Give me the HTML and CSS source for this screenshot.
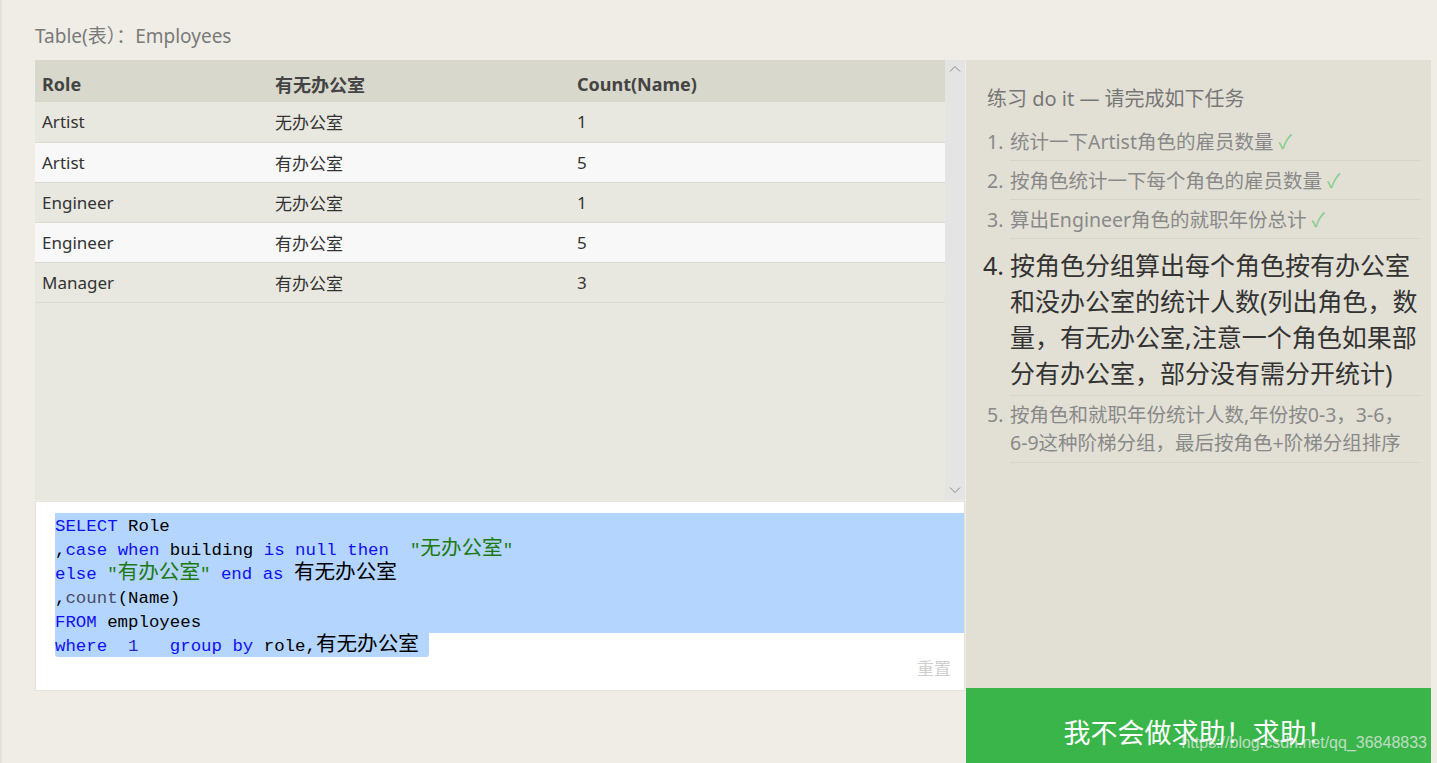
FILE: index.html
```html
<!DOCTYPE html>
<html>
    <head>
        <title>SQL 练习</title>
        <meta charset="utf-8"/>
        <link rel="stylesheet" href="styles.css">
    </head>
    <body>
        <div id="page">
            <h2 class="caption">Table(表）：Employees</h2>
            <div class="main">
                <div class="left">
                    <div class="result">
                        <div class="grid">
                            <table>
                                <colgroup>
                                    <col class="c1">
                                    <col class="c2">
                                    <col>
                                </colgroup>
                                <thead>
                                    <tr><th>Role</th><th>有无办公室</th><th>Count(Name)</th></tr>
                                </thead>
                                <tbody>
                                    <tr><td>Artist</td><td>无办公室</td><td>1</td></tr>
                                    <tr><td>Artist</td><td>有办公室</td><td>5</td></tr>
                                    <tr><td>Engineer</td><td>无办公室</td><td>1</td></tr>
                                    <tr><td>Engineer</td><td>有办公室</td><td>5</td></tr>
                                    <tr><td>Manager</td><td>有办公室</td><td>3</td></tr>
                                </tbody>
                            </table>
                        </div>
                        <div class="scrollbar">
                            <svg width="12" height="8" viewBox="0 0 12 8"><path d="M1 6.5 L6 1.5 L11 6.5" fill="none" stroke="#8a8a8a" stroke-width="1"/></svg>
                            <svg width="12" height="8" viewBox="0 0 12 8"><path d="M1 1.5 L6 6.5 L11 1.5" fill="none" stroke="#8a8a8a" stroke-width="1"/></svg>
                        </div>
                    </div>
                    <div class="editor">
                        <div class="code">
                            <div class="line sel"><span class="kw">SELECT</span> Role</div>
                            <div class="line sel">,<span class="kw">case</span> <span class="kw">when</span> building <span class="kw">is</span> <span class="kw">null</span> <span class="kw">then</span>  <span class="str">"<span class="zh">无办公室</span>"</span></div>
                            <div class="line sel"><span class="kw">else</span> <span class="str">"<span class="zh">有办公室</span>"</span> <span class="kw">end</span> <span class="kw">as</span> <span class="zh">有无办公室</span></div>
                            <div class="line sel">,<span class="fn">count</span>(Name)</div>
                            <div class="line sel"><span class="kw">FROM</span> employees</div>
                            <div class="line"><span class="sel"><span class="kw">where</span>  <span class="num">1</span>   <span class="kw">group</span> <span class="kw">by</span> role,<span class="zh">有无办公室</span> </span></div>
                        </div>
                        <div class="reset">重置</div>
                    </div>
                </div>
                <div class="right">
                    <div class="tasks">
                        <h3>练习 do it — 请完成如下任务</h3>
                        <ol>
                            <li class="done"><span class="no">1.</span><div class="txt">统计一下Artist角色的雇员数量 <span class="ok">✓</span></div></li>
                            <li class="done"><span class="no">2.</span><div class="txt">按角色统计一下每个角色的雇员数量 <span class="ok">✓</span></div></li>
                            <li class="done"><span class="no">3.</span><div class="txt">算出Engineer角色的就职年份总计 <span class="ok">✓</span></div></li>
                            <li class="current"><span class="no">4.</span><div class="txt">按角色分组算出每个角色按有办公室和没办公室的统计人数(列出角色，数量，有无办公室,注意一个角色如果部分有办公室，部分没有需分开统计)</div></li>
                            <li class="todo"><span class="no">5.</span><div class="txt">按角色和就职年份统计人数,年份按0-3，3-6，6-9这种阶梯分组，最后按角色+阶梯分组排序</div></li>
                        </ol>
                    </div>
                    <div class="help">我不会做求助！求助！</div>
                </div>
            </div>
        </div>
        <div class="watermark">https://blog.csdn.net/qq_36848833</div>
    </body>
</html>
```

FILE: styles.css
```css
*{
    margin: 0;
    padding: 0;
    box-sizing: border-box;
}
html,body{
    height: 763px;
    overflow: hidden;
}
body{
    background-color: #efede6;
    border-left: 2px solid #e3e1d9;
    font-family: "Noto Sans", "Noto Sans CJK SC", sans-serif;
    position: relative;
}
#page{
    padding: 24px 0 0 33px;
}
.caption{
    font-size: 19px;
    font-weight: normal;
    line-height: 24px;
    color: #7a7a7a;
    margin-bottom: 12px;
}
.main{
    display: flex;
    gap: 1px;
}
.left{
    width: 930px;
}

/* 结果表格 */
.result{
    display: flex;
    height: 440px;
}
.result .grid{
    flex: 1;
    background-color: #e9e8e0;
}
.result table{
    width: 100%;
    border-collapse: collapse;
    table-layout: fixed;
}
.result col.c1{
    width: 233px;
}
.result col.c2{
    width: 302px;
}
.result th{
    height: 42px;
    padding: 5px 7px 0;
    text-align: left;
    background-color: #d9d8cc;
    color: #444;
    font-size: 18px;
    font-weight: bold;
}
.result td{
    height: 40px;
    padding: 0 7px;
    border-bottom: 1px solid #dcdbd3;
    font-size: 17px;
    color: #333;
}
.result tbody tr:nth-child(even){
    background-color: #f8f8f8;
}
.result .scrollbar{
    width: 20px;
    background-color: #e4e4e4;
    display: flex;
    flex-direction: column;
    justify-content: space-between;
    align-items: center;
    padding: 5px 0 6px;
}

/* 编辑器 */
.editor{
    margin-top: 1px;
    height: 190px;
    background-color: #fff;
    border: 1px solid #e4e2da;
    padding-top: 11px;
}
.code{
    padding-left: 19px;
    font-family: "Liberation Mono", "Noto Sans CJK SC", monospace;
    font-size: 17.4px;
    line-height: 24px;
    color: #000;
}
.code .line{
    height: 24px;
    padding-top: 2px;
    white-space: pre;
}
.code .sel{
    background-color: #b4d5fe;
}
.code .line .sel{
    display: inline-block;
    height: 24px;
    margin-top: -2px;
    padding-top: 2px;
    border-radius: 0 0 3px 3px;
}
.code .zh{
    font-family: "Noto Sans CJK SC", sans-serif;
    font-size: 20.6px;
    line-height: 0;
}
.code .kw{
    color: #1010f0;
}
.code .str{
    color: #1d7a12;
}
.code .fn{
    color: #4a4a68;
}
.code .num{
    color: #2828c8;
}
.reset{
    text-align: right;
    padding-right: 13px;
    font-size: 17px;
    line-height: 24px;
    color: #cfcfcf;
}

/* 任务列表 */
.right{
    width: 465px;
}
.tasks{
    height: 628px;
    background-color: #e2e0d5;
    padding: 27px 10px 0 21px;
}
.tasks h3{
    font-size: 20px;
    font-weight: normal;
    line-height: 24px;
    color: #777;
    margin-bottom: 11px;
}
.tasks ol{
    list-style: none;
}
.tasks li{
    display: flex;
    font-size: 19.5px;
    color: #898989;
}
.tasks li .no{
    width: 23px;
    flex-shrink: 0;
    padding-top: 8px;
    line-height: 24px;
}
.tasks li .txt{
    flex: 1;
    padding: 8px 0 6px;
    line-height: 24px;
    border-bottom: 1px solid #d7d5ca;
}
.tasks .ok{
    color: #80cc8a;
}
.tasks li.current{
    font-size: 25px;
    color: #333;
}
.tasks li.current .no{
    margin-left: -4px;
    width: 27px;
    padding-top: 8px;
    line-height: 36px;
}
.tasks li.current .txt{
    padding: 8px 0 4px;
    line-height: 36px;
}
.tasks li.todo .no{
    padding-top: 5px;
    line-height: 28px;
}
.tasks li.todo .txt{
    padding: 5px 0 5px;
    line-height: 28px;
}
.help{
    height: 75px;
    padding-top: 30px;
    background-color: #3ab54a;
    color: #fff;
    text-align: center;
    font-size: 27px;
    line-height: 30px;
}
.watermark{
    position: absolute;
    right: 10px;
    top: 733px;
    font-family: "Liberation Sans", sans-serif;
    font-size: 16px;
    line-height: 20px;
    color: rgba(235, 235, 235, 0.75);
}
```
